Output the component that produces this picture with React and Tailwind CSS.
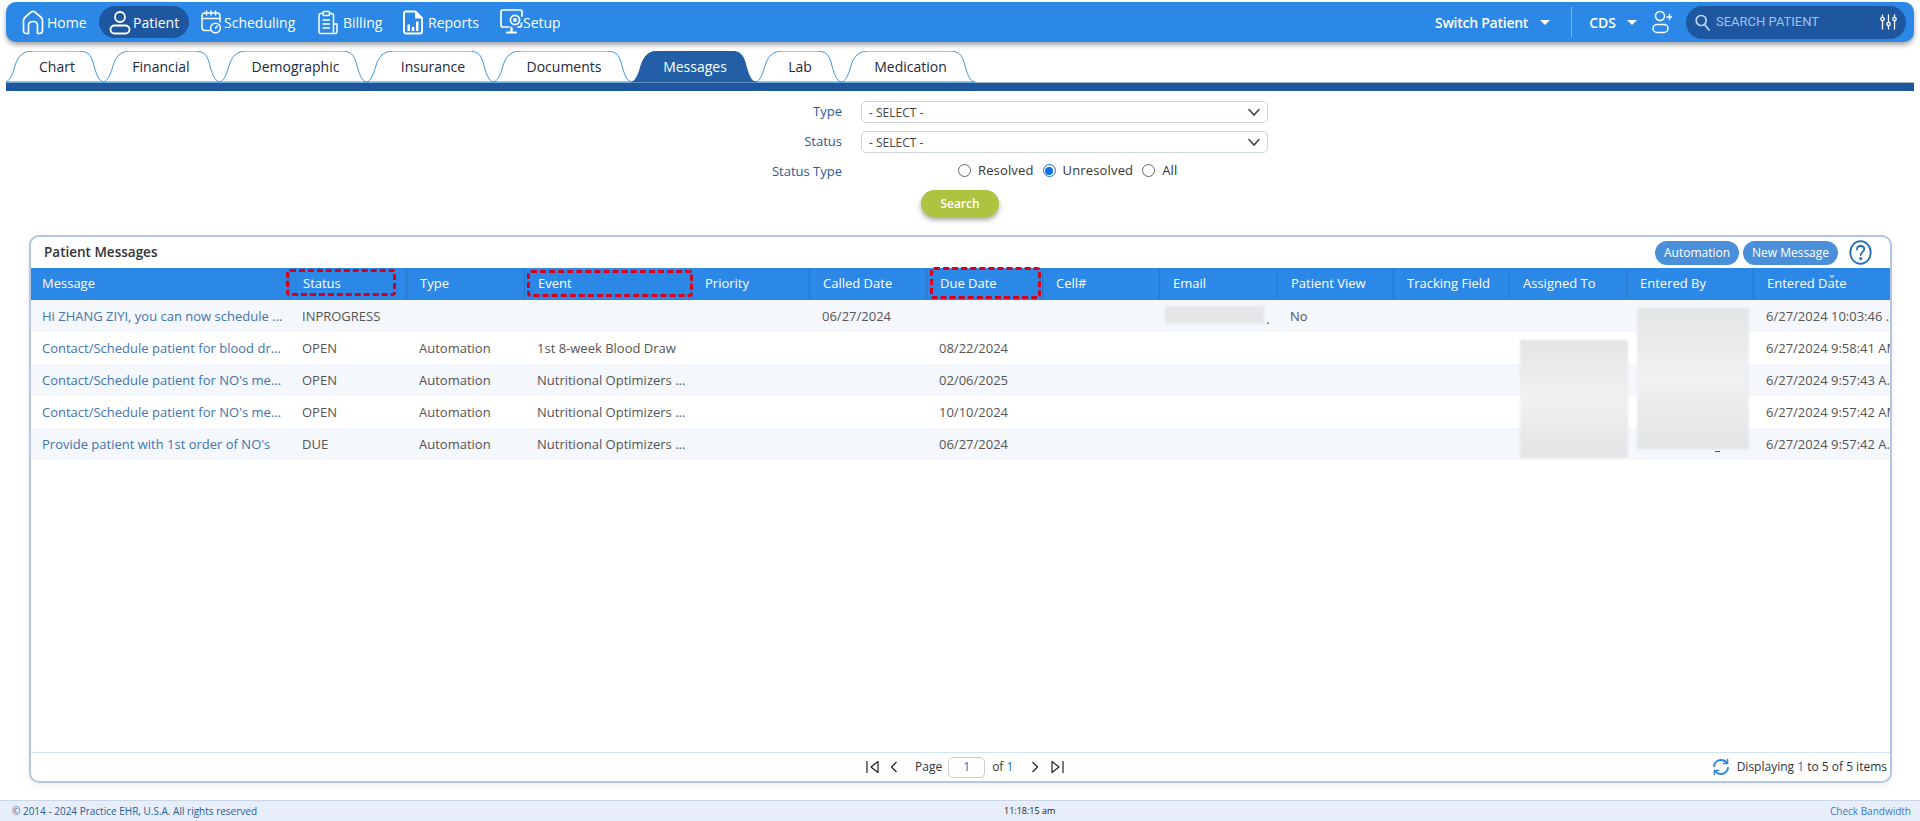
import React from "react";

const Home = () => (
  <svg width="22" height="25" viewBox="0 0 22 25" fill="none" stroke="currentColor" strokeWidth="1.7" strokeLinejoin="round">
    <path d="M1.5 10.5 C1.5 9 2.2 8 3.3 7 L9 2.2 C10.2 1.2 11.8 1.2 13 2.2 L18.7 7 C19.8 8 20.5 9 20.5 10.5 V20.5 C20.5 22.5 19.3 23.5 17.5 23.5 H15.5 V15.5 C15.5 13 13.5 11.5 11 11.5 C8.5 11.5 6.5 13 6.5 15.5 V23.5 H4.5 C2.7 23.5 1.5 22.5 1.5 20.5 Z" />
  </svg>
);
const PatientIco = ({ w = 22 }) => (
  <svg width={w} height="25" viewBox="0 0 22 25" fill="none" stroke="currentColor" strokeWidth="1.8">
    <circle cx="11" cy="7" r="5" />
    <rect x="1.5" y="15.5" width="19" height="8" rx="4" />
  </svg>
);
const Sched = () => (
  <svg width="20" height="25" viewBox="0 0 20 25" fill="none" stroke="currentColor" strokeWidth="1.5" strokeLinecap="round">
    <path d="M9 20.5 H4 C2 20.5 1 19.5 1 17.5 V6 C1 4 2 3 4 3 H16 C18 3 19 4 19 6 V12" />
    <path d="M1 8.5 H19 M5.5 1 V5 M10 1 V5 M14.5 1 V5" />
    <circle cx="14.5" cy="18" r="4.8" />
    <path d="M14.5 18 L16.2 16.2" />
  </svg>
);
const Bill = () => (
  <svg width="20" height="25" viewBox="0 0 20 25" fill="none" stroke="currentColor" strokeWidth="1.5" strokeLinecap="round">
    <path d="M5 3.5 H3 C2 3.5 1 4.5 1 5.5 V21.5 C1 22.8 2 23.5 3 23.5 H17 C18.2 23.5 19 22.8 19 21.5 V14 H15.5 V5.5 C15.5 4.5 14.5 3.5 13.5 3.5 H11.5" />
    <rect x="5" y="1.5" width="6.5" height="4" rx="1" />
    <path d="M5 10 H11.5 M5 14 H11.5 M5 18 H11.5 M15.5 14 V23" />
  </svg>
);
const Rep = () => (
  <svg width="20" height="25" viewBox="0 0 20 25" fill="none" stroke="currentColor" strokeLinejoin="round">
    <path strokeWidth="1.9" d="M3 1.5 H12.5 L19 8 V21.5 C19 22.8 18.2 23.5 17 23.5 H3 C1.8 23.5 1 22.8 1 21.5 V3.5 C1 2.2 1.8 1.5 3 1.5 Z" />
    <path fill="currentColor" stroke="none" d="M12 1.5 L19 8.5 H12 Z" />
    <path fill="currentColor" stroke="none" d="M4.5 14.5 H7 V21 H4.5 Z M8.8 17 H11.3 V21 H8.8 Z M13 11.5 H15.5 V21 H13 Z" />
  </svg>
);
const SetupIco = () => (
  <svg width="23" height="26" viewBox="0 0 23 26" fill="none" stroke="currentColor" strokeWidth="1.7" strokeLinecap="round">
    <path d="M9 18 H3 C1.8 18 1 17.2 1 16 V3 C1 1.8 1.8 1 3 1 H20 C21.2 1 22 1.8 22 3 V7" />
    <path d="M21.5 14 V16 C21.5 17.2 20.7 18 19.5 18 H18" />
    <circle cx="15" cy="11" r="4.6" />
    <circle cx="15" cy="11" r="1.1" fill="currentColor" />
    <path d="M11.5 19 V22" strokeWidth="2.4" />
    <path d="M7 23.5 H16" strokeWidth="2.2" />
  </svg>
);
const UserPlus = () => (
  <svg width="20" height="24" viewBox="0 0 20 24" fill="none" stroke="currentColor" strokeWidth="1.5" strokeLinecap="round">
    <circle cx="8" cy="6" r="4.5" />
    <rect x="1" y="14.5" width="15" height="8" rx="4" />
    <path d="M15 7 H20 M17.5 4.5 V9.5" />
  </svg>
);
const SearchIco = () => (
  <svg width="15" height="17" viewBox="0 0 15 17" fill="none" stroke="currentColor" strokeWidth="1.7" strokeLinecap="round">
    <circle cx="6.2" cy="6.5" r="5" />
    <path d="M10 11 L14 16" />
  </svg>
);
const Sliders = () => (
  <svg width="17" height="16" viewBox="0 0 17 16" fill="none" stroke="currentColor" strokeWidth="1.3" strokeLinecap="round">
    <path d="M2.5 1 V15 M8.5 1 V15 M14.5 1 V15" />
    <circle cx="2.5" cy="5" r="1.7" fill="#1E579F" />
    <circle cx="8.5" cy="10" r="1.7" fill="#1E579F" />
    <circle cx="14.5" cy="5" r="1.7" fill="#1E579F" />
  </svg>
);
const Caret = () => (
  <span className="inline-block w-0 h-0 border-l-[5px] border-r-[5px] border-t-[5px] border-l-transparent border-r-transparent border-t-white" />
);
const Chev = () => (
  <svg width="14" height="9" viewBox="0 0 14 9" fill="none" stroke="#444" strokeWidth="1.6" strokeLinecap="round">
    <path d="M2 1.5 L7 7 L12 1.5" />
  </svg>
);
const Help = () => (
  <svg width="23" height="25" viewBox="0 0 23 25" fill="none" stroke="#1E6FB8" strokeWidth="1.8" strokeLinecap="round">
    <ellipse cx="11.5" cy="12.5" rx="10.2" ry="11.3" />
    <path d="M8 9.5 C8 7.3 9.6 6 11.6 6 C13.6 6 15.2 7.3 15.2 9.3 C15.2 11.8 11.7 12 11.7 15" />
    <circle cx="11.7" cy="18.5" r=".7" fill="#1E6FB8" />
  </svg>
);
const PagerIco = ({ d, w = 14 }) => (
  <svg width={w} height="14" viewBox={`0 0 ${w} 14`} fill="none" stroke="#222" strokeWidth="1.2" strokeLinejoin="round">
    <path d={d} />
  </svg>
);
const Refresh = () => (
  <svg width="18" height="18" viewBox="0 0 18 18" fill="none" stroke="#2B88E6" strokeWidth="2" strokeLinecap="round">
    <path d="M2 8 C2.5 4.5 5.5 2 9 2 C11.5 2 13.5 3 15 5" />
    <path d="M16 10 C15.5 13.5 12.5 16 9 16 C6.5 16 4.5 15 3 13" />
    <path d="M15.5 1.5 V5.5 H11.5" strokeWidth="1.6" />
    <path d="M2.5 16.5 V12.5 H6.5" strokeWidth="1.6" />
  </svg>
);

const Tab = ({ label, w, active, cls = "" }) => {
  const h = 31;
  const d = `M0,${h} C3,${h - 1} 6,${h - 6} 8,${h - 13} C10,${h - 20} 13,${h - 31} 26,0 L${w - 26},0 C${w - 15},0 ${w - 13},5 ${w - 11},${h - 20} C${w - 8},${h - 8} ${w - 5},${h} ${w},${h}`;
  return (
    <div className={"relative h-[31px] flex items-center justify-center shrink-0 " + cls} style={{ width: w }}>
      <svg className="absolute inset-0" width={w} height={h + 1} viewBox={`0 0 ${w} ${h + 1}`} fill="none">
        <path d={d + " Z"} fill={active ? "#225FA6" : "#fff"} stroke={active ? "#225FA6" : "#3C95DC"} strokeWidth="1" />
      </svg>
      <span className={"relative text-[14px] " + (active ? "text-white" : "text-[#1c2a3a]")}>{label}</span>
    </div>
  );
};

const Th = ({ children }) => (
  <div className="h-full flex items-center pl-[13px] border-l border-[#2577CB] whitespace-nowrap overflow-hidden">{children}</div>
);

const rows = [
  { m: "Hi ZHANG ZIYI, you can now schedule ...", s: "INPROGRESS", t: "", e: "", c: "06/27/2024", d: "", pv: "No", ed: "6/27/2024 10:03:46 ..." },
  { m: "Contact/Schedule patient for blood dr...", s: "OPEN", t: "Automation", e: "1st 8-week Blood Draw", c: "", d: "08/22/2024", pv: "", ed: "6/27/2024 9:58:41 AM" },
  { m: "Contact/Schedule patient for NO's me...", s: "OPEN", t: "Automation", e: "Nutritional Optimizers ...", c: "", d: "02/06/2025", pv: "", ed: "6/27/2024 9:57:43 A..." },
  { m: "Contact/Schedule patient for NO's me...", s: "OPEN", t: "Automation", e: "Nutritional Optimizers ...", c: "", d: "10/10/2024", pv: "", ed: "6/27/2024 9:57:42 AM" },
  { m: "Provide patient with 1st order of NO's", s: "DUE", t: "Automation", e: "Nutritional Optimizers ...", c: "", d: "06/27/2024", pv: "", ed: "6/27/2024 9:57:42 A..." },
];

const cols = "grid grid-cols-[258px_117px_118px_167px_118px_117px_116px_117px_118px_116px_116px_117px_127px_137px]";
const Td = ({ children }) => (
  <div className="pl-[13px] whitespace-nowrap overflow-hidden">{children}</div>
);

const Radio = ({ label, on }) => (
  <label className="flex items-center gap-[7px]">
    {on ? (
      <span className="w-[13px] h-[13px] rounded-full border-[1.5px] border-[#0B6FE8] flex items-center justify-center">
        <span className="w-[8px] h-[8px] rounded-full bg-[#0B6FE8]" />
      </span>
    ) : (
      <span className="w-[13px] h-[13px] rounded-full border border-[#666] bg-white" />
    )}
    <span className="text-[13px] text-[#333] tracking-[0.15px]">{label}</span>
  </label>
);

const Blur = ({ cls }) => (
  <div className={"absolute blur-[1px] bg-gradient-to-b from-[#e3e5e7] via-[#f0f1f2] to-[#e2e4e6] " + cls} />
);

export default function App() {
  return (
    <div className="w-[1920px] h-[821px] overflow-hidden bg-white flex flex-col font-['Open_Sans',sans-serif]">
      <header className="mt-[2px] ml-[6px] w-[1908px] h-[40px] shrink-0 bg-[#2B88E6] rounded-[10px] shadow-[0_3px_5px_rgba(0,0,0,0.35)] flex items-center text-white relative z-10">
        <div className="flex items-center ml-[16px] text-[14px]">
          <div className="flex items-center gap-[3px] w-[77px]"><Home /><span>Home</span></div>
          <div className="flex items-center gap-[2px] w-[90px] h-[32px] pl-[10px] rounded-full bg-[#1E579F]"><PatientIco /><span>Patient</span></div>
          <div className="flex items-center gap-[3px] ml-[12px] w-[117px]"><Sched /><span>Scheduling</span></div>
          <div className="flex items-center gap-[5px] w-[85px]"><Bill /><span>Billing</span></div>
          <div className="flex items-center gap-[5px] w-[97px]"><Rep /><span>Reports</span></div>
          <div className="flex items-center"><SetupIco /><span>Setup</span></div>
        </div>
        <div className="ml-auto flex items-center h-full">
          <span className="text-[14px] font-semibold tracking-[-0.25px]">Switch Patient</span>
          <span className="ml-[12px] flex"><Caret /></span>
          <span className="ml-[21px] w-px h-[30px] bg-[#7DB5EE]" />
          <span className="ml-[17px] text-[14px] font-semibold">CDS</span>
          <span className="ml-[11px] flex"><Caret /></span>
          <span className="ml-[15px] flex"><UserPlus /></span>
          <div className="ml-[14px] mr-[8px] w-[220px] h-[33px] rounded-full bg-[#1E579F] flex items-center pl-[9px] pr-[9px] text-[#BFD9F5]">
            <SearchIco />
            <span className="ml-[6px] font-['Roboto',sans-serif] text-[13px] text-[#9CC4EE]">SEARCH PATIENT</span>
            <span className="ml-auto flex text-white"><Sliders /></span>
          </div>
        </div>
      </header>

      <nav className="mt-[9px] ml-[6px] w-[1908px] h-[31px] shrink-0 flex">
        <Tab label="Chart" w={98} cls="pl-[4px]" />
        <Tab label="Financial" w={116} cls="pr-[2px]" />
        <Tab label="Demographic" w={147} cls="pl-[4px]" />
        <Tab label="Insurance" w={127} cls="pl-[5px]" />
        <Tab label="Documents" w={138} cls="pl-[2px]" />
        <Tab label="Messages" w={124} active cls="pl-[2px]" />
        <Tab label="Lab" w={86} cls="pl-[2px]" />
        <Tab label="Medication" w={133} cls="pl-[4px]" />
      </nav>
      <div className="ml-[6px] w-[1908px] h-[9px] shrink-0 bg-[#1E579F] border-t border-[#A9B8C9]" />

      <section className="mt-[10px] h-[134px] shrink-0 flex flex-col text-[13px]">
        <div className="flex items-center h-[22px]">
          <span className="w-[842px] text-right text-[#2A5C97]">Type</span>
          <div className="ml-[19px] w-[407px] h-[22px] rounded-[5px] border border-[#CBD3E1] flex items-center pl-[7px] pr-[6px] pt-px text-[12px] text-[#444]">
            <span>- SELECT -</span><span className="ml-auto flex"><Chev /></span>
          </div>
        </div>
        <div className="flex items-center h-[22px] mt-[8px]">
          <span className="w-[842px] text-right text-[#2A5C97]">Status</span>
          <div className="ml-[19px] w-[407px] h-[22px] rounded-[5px] border border-[#CBD3E1] flex items-center pl-[7px] pr-[6px] pt-px text-[12px] text-[#444]">
            <span>- SELECT -</span><span className="ml-auto flex"><Chev /></span>
          </div>
        </div>
        <div className="flex items-center h-[22px] mt-[8px]">
          <span className="w-[842px] text-right text-[#2A5C97]">Status Type</span>
          <div className="ml-[116px] pb-[3px] flex items-center gap-[9px]">
            <Radio label="Resolved" />
            <Radio label="Unresolved" on />
            <Radio label="All" />
          </div>
        </div>
        <div className="mt-[7px] ml-[921px] w-[78px] h-[27px] rounded-full bg-[#AEC33F] text-white text-[12px] font-semibold flex items-center justify-center shadow-[0_3px_5px_rgba(0,0,0,0.35)]">
          Search
        </div>
      </section>

      <main className="ml-[29px] w-[1863px] h-[548px] shrink-0 rounded-[10px] border-2 border-[#B4C6E3] flex flex-col relative overflow-hidden shadow-[0_2px_6px_rgba(0,0,0,0.08)]">
        <div className="h-[31px] shrink-0 flex items-center pl-[13px] pr-[18px]">
          <span className="text-[13.5px] font-semibold text-[#333]">Patient Messages</span>
          <div className="ml-auto flex items-center">
            <span className="w-[84px] h-[24px] rounded-full bg-[#4A8FD9] text-white text-[12px] flex items-center justify-center">Automation</span>
            <span className="ml-[4px] w-[95px] h-[24px] rounded-full bg-[#4A8FD9] text-white text-[12px] flex items-center justify-center">New Message</span>
            <span className="ml-[11px] flex"><Help /></span>
          </div>
        </div>
        <div className={cols + " h-[32px] shrink-0 bg-[#2B88E6] text-white text-[13px]"}>
          <div className="h-full flex items-center pl-[11px]">Message</div>
          {["Status", "Type", "Event", "Priority", "Called Date", "Due Date", "Cell#", "Email", "Patient View", "Tracking Field", "Assigned To", "Entered By", "Entered Date"].map((h) => (
            <Th key={h}>{h}</Th>
          ))}
        </div>
        <div className="flex-1 text-[13px] text-[#555]">
          {rows.map((r, i) => (
            <div key={i} className={cols + " h-[32px] pt-[2px] items-center " + (i % 2 === 0 ? "bg-[#F4F7FC]" : "bg-white")}>
              <div className="pl-[11px] whitespace-nowrap overflow-hidden text-[#3F74AE]">{r.m}</div>
              <Td>{r.s}</Td>
              <Td>{r.t}</Td>
              <Td>{r.e}</Td>
              <Td />
              <Td>{r.c}</Td>
              <Td>{r.d}</Td>
              <Td />
              <Td />
              <Td>{r.pv}</Td>
              <Td />
              <Td />
              <Td />
              <Td>{r.ed}</Td>
            </div>
          ))}
        </div>
        <div className="h-[29px] shrink-0 border-t border-[#CFE4F7] flex items-center relative text-[12px] text-[#333]">
          <div className="ml-[835px] flex items-center">
            <PagerIco d="M1 1 V13 M12 1.5 L5 7 L12 12.5 Z" />
            <span className="ml-[10px] flex"><PagerIco w={8} d="M6.5 2 L1.5 7 L6.5 12" /></span>
            <span className="ml-[17px]">Page</span>
            <span className="ml-[6px] w-[37px] h-[21px] rounded-[5px] border border-[#CCC] flex items-center justify-center text-[#1E6FB8]">1</span>
            <span className="ml-[7px]">of <span className="text-[#1E6FB8]">1</span></span>
            <span className="ml-[18px] flex"><PagerIco w={8} d="M1.5 2 L6.5 7 L1.5 12" /></span>
            <span className="ml-[11px] flex"><PagerIco d="M13 1 V13 M2 1.5 L9 7 L2 12.5 Z" /></span>
          </div>
          <div className="ml-auto mr-[3px] flex items-center gap-[7px]">
            <Refresh />
            <span>Displaying <span className="text-[#1E6FB8]">1</span> to 5 of 5 items</span>
          </div>
        </div>

        <div className="absolute left-[1134px] top-[69px] w-[99px] h-[18px] blur-[1px] bg-[#E4E6E8]" />
        <Blur cls="left-[1489px] top-[103px] w-[108px] h-[118px]" />
        <Blur cls="left-[1606px] top-[71px] w-[112px] h-[141px]" />
        <span className="absolute left-[1235px] top-[76px] text-[13px] text-[#555] leading-none">.</span>
        <span className="absolute left-[1684px] top-[214px] w-[5px] h-px bg-[#555]" />
        <span className="absolute left-[1798px] top-[38px] w-0 h-0 border-l-[3px] border-r-[3px] border-t-[4px] border-l-transparent border-r-transparent border-t-[#9FBBD8]" />

        <div className="absolute left-[255px] top-[32px] w-[110px] h-[27px] rounded-[4px] border-[3px] border-dashed border-[#D6001C]" />
        <div className="absolute left-[496px] top-[33px] w-[166px] h-[27px] rounded-[4px] border-[3px] border-dashed border-[#D6001C]" />
        <div className="absolute left-[899px] top-[30px] w-[111px] h-[32px] rounded-[4px] border-[3px] border-dashed border-[#D6001C]" />
      </main>

      <footer className="mt-[17px] h-[21px] shrink-0 bg-[#E8EEF9] border-t border-[#CBD6E8] flex items-center px-[9px] text-[10px]">
        <span className="text-[#2A5C97] pl-[3px] w-[995px]">© 2014 - 2024 Practice EHR, U.S.A. All rights reserved</span>
        <span className="text-[#222] text-[9px]">11:18:15 am</span>
        <span className="text-[#3A78C8] ml-auto">Check Bandwidth</span>
      </footer>
    </div>
  );
}
